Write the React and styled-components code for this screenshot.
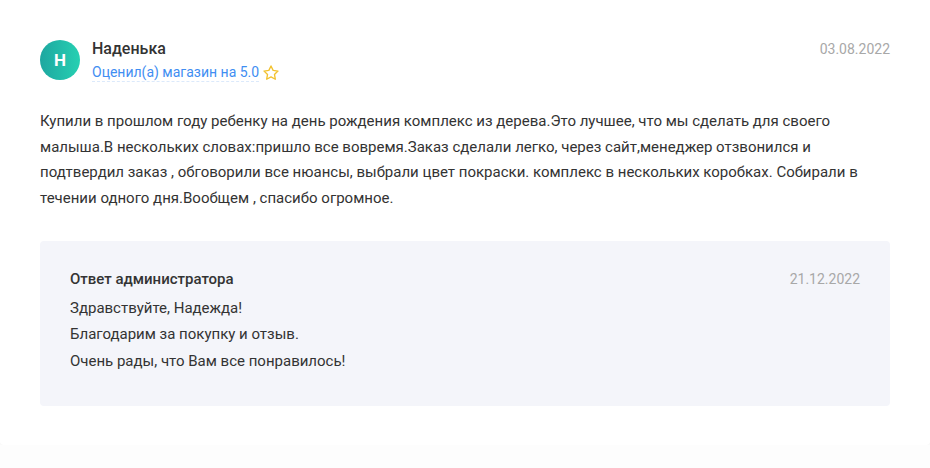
import React from "react";
import styled, { createGlobalStyle } from "styled-components";

const Global = createGlobalStyle`
  html, body { margin: 0; padding: 0; background: #fdfdfd; }
  body { font-family: Roboto, "Liberation Sans", sans-serif; color: #333; }
  * { box-sizing: border-box; }
`;

const Card = styled.article`
  width: 930px;
  background: #fff;
  border-radius: 0 0 4px 4px;
  box-shadow: 0 1px 3px rgba(0, 0, 0, 0.04);
  padding: 40px 40px 39px;
`;

const Header = styled.header`
  display: flex;
  align-items: flex-start;
  gap: 12px;
`;

const Avatar = styled.div`
  width: 40px;
  height: 40px;
  border-radius: 50%;
  flex-shrink: 0;
  background: linear-gradient(90deg, #1ea7a0 0%, #26d0b2 100%);
  color: #fff;
  font-size: 17px;
  font-weight: 700;
  display: flex;
  align-items: center;
  justify-content: center;
`;

const Who = styled.div`
  flex: 1;
  display: flex;
  flex-direction: column;
  gap: 5px;
`;

const Name = styled.div`
  font-size: 16px;
  font-weight: 500;
  color: #333;
  line-height: 18px;
`;

const Rating = styled.div`
  display: flex;
  align-items: center;
  gap: 3px;
  font-size: 14px;
  line-height: 18px;
  color: #3f8ef2;
`;

const RatingText = styled.span`
  border-bottom: 1px dashed #dbe9fb;
`;

const DateText = styled.div`
  font-size: 14px;
  color: #a8a8a8;
  line-height: 18px;
  padding-top: ${(p) => p.$top || 0}px;
`;

const Body = styled.p`
  margin: 27px 0 29px;
  font-size: 15px;
  line-height: 25.7px;
  color: #333;
`;

const Reply = styled.section`
  background: #f4f5fa;
  border-radius: 4px;
  padding: 29px 30px 32px;
`;

const ReplyHead = styled.div`
  display: flex;
  justify-content: space-between;
  align-items: center;
  margin-bottom: 7px;
`;

const ReplyTitle = styled.div`
  font-size: 15px;
  font-weight: 500;
  color: #333;
  line-height: 18px;
`;

const ReplyLine = styled.div`
  font-size: 15px;
  line-height: 26.5px;
  color: #333;
`;

const Star = () => (
  <svg width="18" height="18" viewBox="0 0 24 24" fill="none" stroke="#f2c230" strokeWidth="1.8" strokeLinejoin="round">
    <path d="M12 2.6l2.85 5.9 6.45.9-4.7 4.5 1.15 6.4L12 17.25 6.25 20.3l1.15-6.4-4.7-4.5 6.45-.9z" />
  </svg>
);

export default function App() {
  return (
    <>
      <Global />
      <Card>
        <Header>
          <Avatar>Н</Avatar>
          <Who>
            <Name>Наденька</Name>
            <Rating>
              <RatingText>Оценил(а) магазин на 5.0</RatingText>
              <Star />
            </Rating>
          </Who>
          <DateText $top={-1}>03.08.2022</DateText>
        </Header>
        <Body>
          Купили в прошлом году ребенку на день рождения комплекс из дерева.Это лучшее, что мы сделать для своего
          малыша.В нескольких словах:пришло все вовремя.Заказ сделали легко, через сайт,менеджер отзвонился и
          подтвердил заказ , обговорили все нюансы, выбрали цвет покраски. комплекс в нескольких коробках. Собирали в
          течении одного дня.Вообщем , спасибо огромное.
        </Body>
        <Reply>
          <ReplyHead>
            <ReplyTitle>Ответ администратора</ReplyTitle>
            <DateText>21.12.2022</DateText>
          </ReplyHead>
          <ReplyLine>Здравствуйте, Надежда!</ReplyLine>
          <ReplyLine>Благодарим за покупку и отзыв.</ReplyLine>
          <ReplyLine>Очень рады, что Вам все понравилось!</ReplyLine>
        </Reply>
      </Card>
    </>
  );
}
